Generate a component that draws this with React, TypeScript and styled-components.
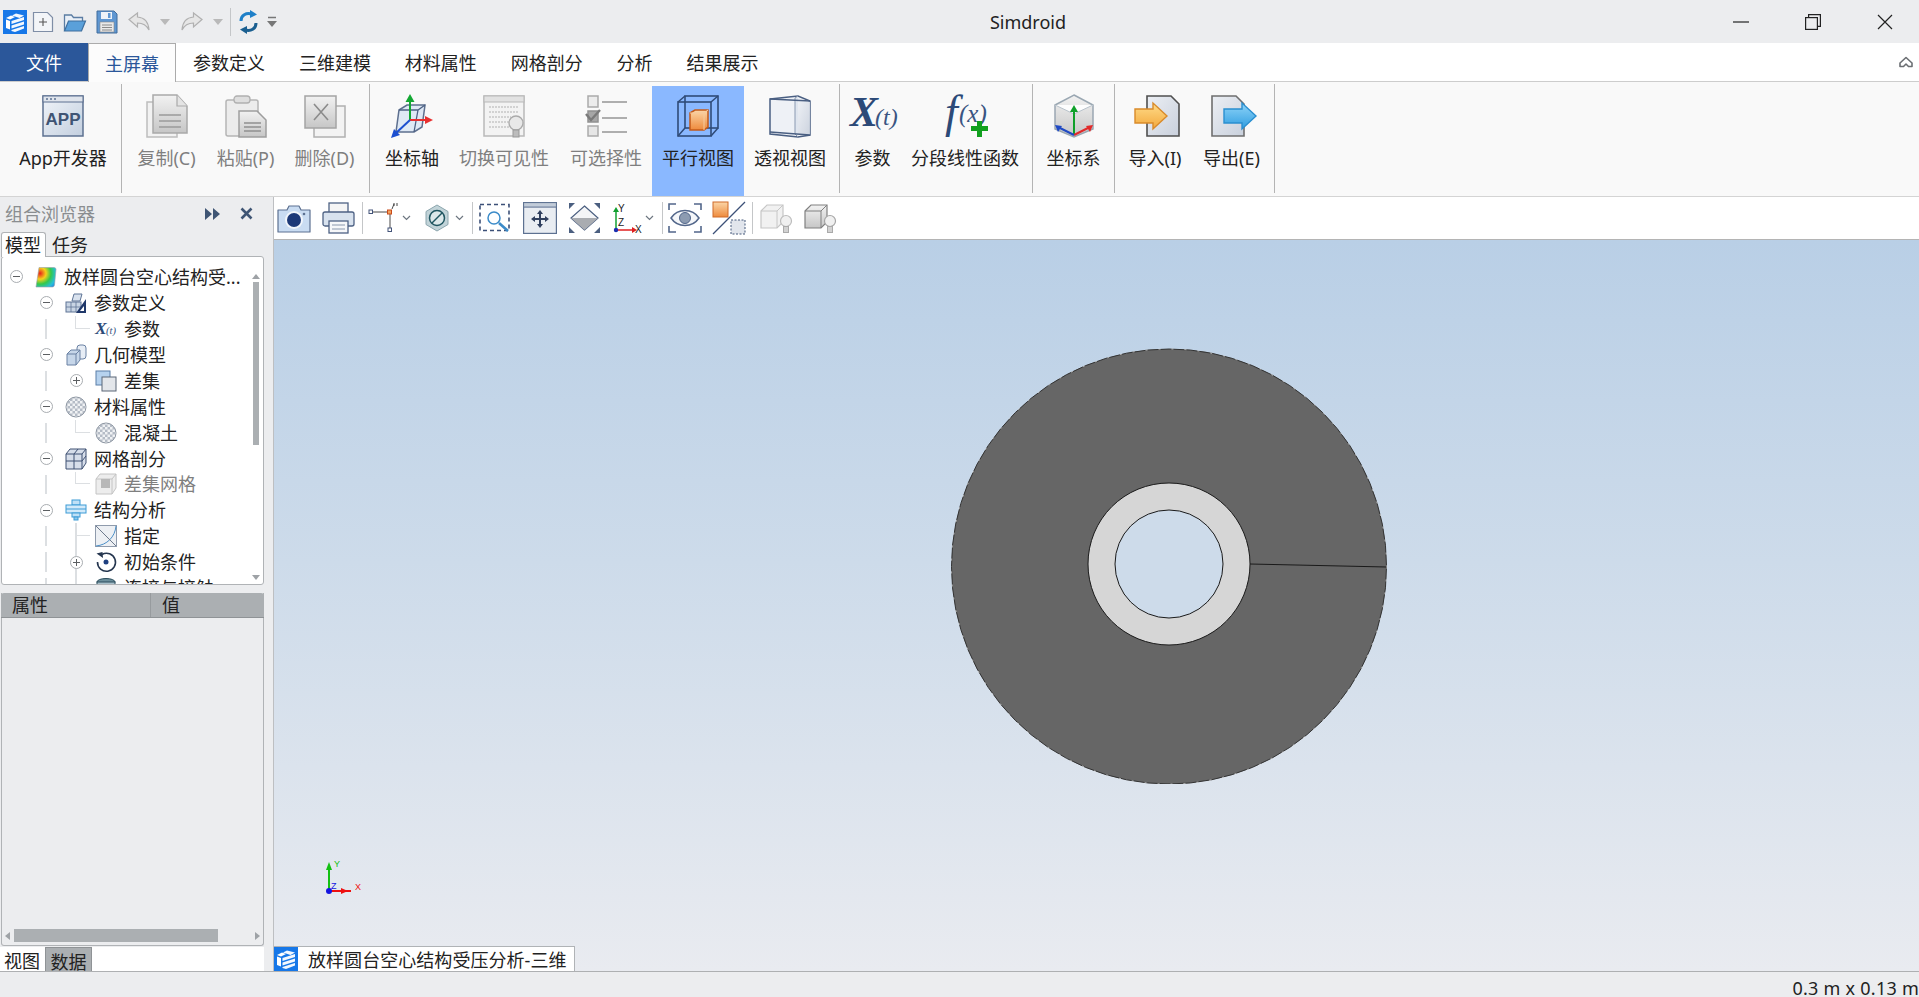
import React from "react";
import styled, { createGlobalStyle } from "styled-components";

const Global = createGlobalStyle`
  html, body { margin: 0; padding: 0; background: #ecedef; overflow: hidden; }
  * { box-sizing: border-box; }
`;
const FONT = `"Noto Sans", "Noto Sans CJK SC", "Liberation Sans", sans-serif`;

const Page = styled.div`
  width: 1919px; height: 997px; display: flex; flex-direction: column; overflow: hidden;
  font-family: ${FONT}; font-size: 18px; color: #222; background: #ecedef;
`;
const DefsHolder = styled.svg`position: absolute; width: 0; height: 0;`;
const Ico = styled.svg`display: block; flex: none; overflow: visible;`;

/* title bar */
const TitleBar = styled.div`height: 43px; flex: none; display: flex; align-items: center; background: #ecedef; position: relative;`;
const QuickAccess = styled.div`width: 989px; flex: none; display: flex; align-items: center; padding-left: 3px;`;
const QuickSlot = styled.div<{ $ml?: number }>`margin-left: ${p => p.$ml ?? 0}px; flex: none;`;
const QuickSep = styled.div<{ $ml?: number }>`width: 1px; height: 28px; background: #c4c6c8; margin-left: ${p => p.$ml ?? 0}px;`;
const AppTitle = styled.div`width: 78px; text-align: center; font-size: 18px; line-height: 24px; color: #222;`;
const WinControls = styled.div`margin-left: auto; display: flex; align-items: center; padding-right: 26px; gap: 56px;`;

/* menu */
const MenuBar = styled.div`height: 39px; flex: none; display: flex; background: #fff; border-bottom: 1px solid #cdcdcd; position: relative;`;
const FileTab = styled.div`width: 88px; height: 38px; padding-top: 1px; background: #2b579a; color: #fff; display: flex; align-items: center; justify-content: center; line-height: 24px;`;
const HomeTab = styled.div`
  width: 88px; height: 39px; padding-top: 1px; background: #fcfcfc; color: #2b579a; border: 1px solid #ababab; border-bottom: none;
  display: flex; align-items: center; justify-content: center; line-height: 24px; margin-right: 17px; position: relative; z-index: 1;
`;
const MenuItem = styled.div`height: 38px; padding-top: 1px; display: flex; align-items: center; margin-right: 33.9px; line-height: 24px; color: #222;`;
const Collapse = styled.div`margin-left: auto; align-self: center; padding-right: 6px;`;

/* ribbon */
const Ribbon = styled.div`height: 115px; flex: none; display: flex; background: #f9f9f9; border-bottom: 1px solid #d4d4d4;`;
const RibbonSep = styled.div<{ $ml?: number }>`width: 1px; height: 109px; margin-top: 2px; margin-left: ${p => p.$ml ?? 0}px; background: #b4b4b4; flex: none;`;
const RibbonBtn = styled.div<{ $w: number; $ml?: number; $pl?: number; $active?: boolean; $off?: boolean }>`
  width: ${p => p.$w}px; margin-left: ${p => p.$ml ?? 0}px; padding-left: ${p => p.$pl ?? 0}px; flex: none; margin-top: 4px; height: 110px; padding-top: 8px;
  display: flex; flex-direction: column; align-items: center;
  background: ${p => (p.$active ? "#8ab8ff" : "transparent")};
  color: ${p => (p.$off ? "#7f7f7f" : "#222")};
`;
const RibbonFill = styled.div<{ $w: number }>`width: ${p => p.$w}px; flex: none;`;
const RibbonLabel = styled.div<{ $mt?: number }>`margin-top: ${p => p.$mt ?? 8}px; line-height: 24px; white-space: nowrap;`;
const XtWrap = styled.div`padding: 2px 0 0 4px;`;

/* main */
const Main = styled.div`flex: 1; display: flex; min-height: 0;`;
const LeftPanel = styled.div`width: 273px; flex: none; display: flex; flex-direction: column; background: #ecedef; position: relative;`;
const DockHeader = styled.div`height: 35px; flex: none; display: flex; align-items: center; padding: 0 20px 2px 5px; color: #8a8d90;`;
const DockTitle = styled.div`flex: 1; line-height: 24px;`;
const DockBtns = styled.div`display: flex; align-items: center; gap: 19px;`;
const TabsRow = styled.div`height: 25px; flex: none; display: flex; padding-left: 1px; position: relative; z-index: 1;`;
const SmallTab = styled.div<{ $active?: boolean }>`
  width: ${p => (p.$active ? 45 : 44)}px; height: 25px; line-height: 24px; text-align: left;
  background: ${p => (p.$active ? "#fff" : "transparent")};
  border: ${p => (p.$active ? "1px solid #b0b3b6" : "1px solid transparent")};
  border-bottom: none; border-radius: 3px 3px 0 0; padding-left: ${p => (p.$active ? 3 : 5)}px;
`;
const TreeBox = styled.div`
  width: 263px; height: 329px; margin: -1px 0 0 1px; flex: none; display: flex; background: #fff;
  border: 1px solid #b0b3b6; border-radius: 3px; overflow: hidden;
`;
const TreeList = styled.div`flex: 1; padding-top: 7px; min-width: 0;`;
const Row = styled.div<{ $level: number; $dim?: boolean }>`
  position: relative; height: 25.95px; display: flex; align-items: center; white-space: nowrap;
  padding-left: ${p => 8 + 30 * p.$level}px; color: ${p => (p.$dim ? "#7f7f7f" : "#222")};
`;
const Expander = styled.div<{ $show: boolean }>`
  width: 13px; height: 13px; flex: none; margin-right: 12px; position: relative; z-index: 1; border-radius: 50%;
  background: ${p => (p.$show ? "#fff" : "transparent")};
  border: ${p => (p.$show ? "1px solid #a9adb1" : "none")};
  display: flex; align-items: center; justify-content: center;
`;
const ExpMark = styled.div<{ $plus?: boolean }>`
  width: 7px; height: 1px; background: #5c5f62; position: relative;
  &::after { content: ""; display: ${p => (p.$plus ? "block" : "none")}; position: absolute; left: 3px; top: -3px; width: 1px; height: 7px; background: #5c5f62; }
`;
const RowText = styled.span`margin-left: 7px; line-height: 24px;`;
const GuideMain = styled.div`position: absolute; left: 43px; top: 3px; bottom: 3px; width: 1.5px; background: #dcdfe2;`;
const Elbow = styled.div`position: absolute; left: 73px; top: 0; width: 15px; height: 50%; border-left: 1.5px solid #dcdfe2; border-bottom: 1.5px solid #dcdfe2;`;
const Through = styled.div`position: absolute; left: 73px; top: 0; bottom: 0; width: 1.5px; background: #dcdfe2;`;
const VScroll = styled.div`width: 12px; flex: none; margin-right: 1px; display: flex; flex-direction: column; align-items: center; padding-top: 17px;`;
const ArrowUp = styled.div`width: 0; height: 0; border: 4px solid transparent; border-top: none; border-bottom: 5px solid #9ea2a6;`;
const ArrowDown = styled.div`width: 0; height: 0; border: 4px solid transparent; border-bottom: none; border-top: 5px solid #9ea2a6; margin-top: auto; margin-bottom: 4px;`;
const VThumb = styled.div`width: 6px; height: 163px; margin-top: 3px; background: #abafb2;`;

const PropsBox = styled.div`
  width: 263px; height: 353px; margin: 8px 0 0 1px; flex: none; display: flex; flex-direction: column;
  border: 1px solid #b0b3b6; border-top: none; border-radius: 0 0 3px 3px; background: #ecedef;
`;
const PropsHead = styled.div`height: 25px; flex: none; margin: 0 -1px; display: flex; background: #abafb2; border-bottom: 1px solid #8f9396; border-radius: 3px 3px 0 0; line-height: 24px;`;
const PropsCol = styled.div<{ $w?: number }>`
  width: ${p => (p.$w ? `${p.$w}px` : "auto")}; flex: ${p => (p.$w ? "none" : 1)}; padding-left: 11px;
  border-right: ${p => (p.$w ? "1px solid #979b9e" : "none")};
`;
const PropsBody = styled.div`flex: 1;`;
const HScroll = styled.div`height: 13px; margin-bottom: 3px; flex: none; display: flex; align-items: center; padding: 0 3px;`;
const ArrowLeft = styled.div`width: 0; height: 0; border: 4px solid transparent; border-left: none; border-right: 5px solid #9ea2a6; flex: none;`;
const ArrowRight = styled.div`width: 0; height: 0; border: 4px solid transparent; border-right: none; border-left: 5px solid #9ea2a6; margin-left: auto; flex: none;`;
const HThumb = styled.div`width: 204px; height: 13px; margin-left: 4px; background: #abafb2;`;
const BottomTabs = styled.div`width: 264px; flex: 1; background: #fff; margin-top: 1px; display: flex; align-items: flex-end; padding-left: 3px; gap: 4px;`;
const BottomTab = styled.div<{ $active?: boolean }>`
  height: 24px; line-height: 28px; padding: 0 1px; width: ${p => (p.$active ? 47 : 38)}px; text-align: center;
  background: ${p => (p.$active ? "#abafb2" : "transparent")};
  border: ${p => (p.$active ? "1px solid #8f9396" : "none")}; border-bottom: none; white-space: nowrap;
`;

const RightCol = styled.div`flex: 1; display: flex; flex-direction: column; min-width: 0; border-left: 1px solid #bdbfc2;`;
const Toolbar = styled.div`height: 43px; flex: none; display: flex; align-items: center; background: #fff; border-bottom: 1px solid #b4b4b4;`;
const ToolSlot = styled.div<{ $ml: number }>`margin-left: ${p => p.$ml}px; flex: none;`;
const ToolSep = styled.div<{ $ml: number }>`margin-left: ${p => p.$ml}px; width: 1px; height: 32px; background: #c4c6c8; flex: none;`;
const Viewport = styled.div`
  flex: 1; position: relative; overflow: hidden; display: flex; align-items: flex-end;
  background: linear-gradient(180deg, #b9cfe6 0%, #cddbea 44%, #e9ebf0 100%);
`;
const Disk = styled.svg`position: absolute; left: 675px; top: 104px;`;
const Triad = styled.svg`position: absolute; left: 40px; top: 618px;`;
const DocTab = styled.div`
  height: 25px; width: 301px; display: flex; align-items: center; background: #fff; border: 1px solid #b0b3b6; border-left: none; border-bottom: none;
`;
const DocIcon = styled.div`width: 24px; height: 24px; flex: none; margin-right: 10px;`;
const DocLabel = styled.div`line-height: 27px; height: 24px; white-space: nowrap; letter-spacing: .05px;`;
const StatusBar = styled.div`
  height: 26px; flex: none; border-top: 1px solid #aeb0b2; background: #ecedef; display: flex; justify-content: flex-end; overflow: hidden; position: relative; z-index: 2;
`;
const StatusText = styled.div`line-height: 24px; margin-top: 4px; letter-spacing: .25px; white-space: nowrap; color: #222;`;

/* ---------- icons ---------- */
const Defs = () => (
  <DefsHolder>
    <defs>
      <linearGradient id="gGray" x1="0" y1="0" x2="0" y2="1"><stop offset="0" stopColor="#f2f2f2" /><stop offset="1" stopColor="#c6c6c6" /></linearGradient>
      <linearGradient id="gBlue" x1="0" y1="0" x2="1" y2="1"><stop offset="0" stopColor="#f0f4f9" /><stop offset="1" stopColor="#c3cfdf" /></linearGradient>
      <linearGradient id="gDoc" x1="0" y1="0" x2="1" y2="1"><stop offset="0" stopColor="#eceff4" /><stop offset="1" stopColor="#c9d0dc" /></linearGradient>
      <linearGradient id="gOrange" x1="0" y1="0" x2="0" y2="1"><stop offset="0" stopColor="#fbd6a8" /><stop offset="1" stopColor="#ee8a3c" /></linearGradient>
      <linearGradient id="gYel" x1="0" y1="0" x2="0" y2="1"><stop offset="0" stopColor="#ffdc8a" /><stop offset="1" stopColor="#f3a83c" /></linearGradient>
      <linearGradient id="gSky" x1="0" y1="0" x2="0" y2="1"><stop offset="0" stopColor="#8fd4f8" /><stop offset="1" stopColor="#2f9de0" /></linearGradient>
      <radialGradient id="gHeat" cx=".2" cy=".3" r="1"><stop offset="0" stopColor="#e8221c" /><stop offset=".3" stopColor="#f5d21c" /><stop offset=".55" stopColor="#35c84a" /><stop offset=".8" stopColor="#26c0d8" /><stop offset="1" stopColor="#2a7be0" /></radialGradient>
      <pattern id="pDots" width="5" height="5" patternUnits="userSpaceOnUse"><rect width="2.500" height="2.500" fill="#fff" opacity=".8" /><rect x="2.500" y="2.500" width="2.500" height="2.500" fill="#fff" opacity=".8" /></pattern>
    </defs>
  </DefsHolder>
);

const Logo = ({ s = 24 }: { s?: number }) => (
  <Ico width={s} height={s} viewBox="0 0 24 24">
    <rect width="24" height="24" fill="#1677e8" />
    <path d="M3 8l5-2.500 4 1.500-5 2.500zM3 9.500l4 1.500v8.500l-4-1.500z" fill="#fff" />
    <path d="M9 5.500l4-2 8 2-4.500 2.500z M8.500 11l12.500-4v3l-12.500 4zM8.500 15.500l12.500-4v3l-12.500 4zM8.500 20l12.500-4v2.500l-9 3.500-3.500-1z" fill="#fff" opacity=".95" />
  </Ico>
);
const NewIc = () => (
  <Ico width="22" height="22" viewBox="0 0 22 22">
    <path d="M1.500 1.500h14l5 5v14h-19z" fill="#f3f5f8" stroke="#7f8ea6" strokeWidth="1.200" />
    <path d="M7 11h8M11 7v8" stroke="#555" strokeWidth="1.100" />
  </Ico>
);
const OpenIc = () => (
  <Ico width="24" height="22" viewBox="0 0 24 22">
    <path d="M1.500 20V4h7l2 2.500h9V10" fill="#eaf0f7" stroke="#5b7da3" strokeWidth="1.300" />
    <path d="M1.500 20l4-10h17l-4 10z" fill="#5aa0da" stroke="#3e6f9e" strokeWidth="1.200" />
  </Ico>
);
const SaveIc = () => (
  <Ico width="22" height="24" viewBox="0 0 22 24">
    <path d="M1 1h17l3 3v19H1z" fill="#5f97d2" stroke="#416c9c" />
    <rect x="5" y="2" width="11" height="7" fill="#eef3f9" />
    <rect x="12" y="3" width="2.500" height="5" fill="#5f97d2" />
    <rect x="4" y="12" width="14" height="10" fill="#e9e9e9" stroke="#888" strokeWidth=".6" />
    <path d="M6 15h10M6 17.500h10M6 20h10" stroke="#8a8a8a" />
  </Ico>
);
const UndoPath = styled.path`fill: #e6e6e6; stroke: #b0b0b0; stroke-width: 1.2;`;
const UndoIc = () => (
  <Ico width="22" height="20" viewBox="0 0 22 20">
    <UndoPath d="M1 7.500L9.500 1v4c7 .5 11 5.500 11.500 13-2.500-5-6-7-11.500-7v4z" />
  </Ico>
);
const RedoIc = () => (
  <Ico width="22" height="20" viewBox="0 0 22 20">
    <UndoPath d="M21 7.500L12.500 1v4C5.500 5.500 1.500 10.500 1 18c2.500-5 6-7 11.500-7v4z" />
  </Ico>
);
const SmallDown = ({ c = "#b9b9b9" }: { c?: string }) => (
  <Ico width="10" height="6" viewBox="0 0 10 6"><path d="M0 0h10L5 6z" fill={c} /></Ico>
);
const RefreshIc = () => (
  <Ico width="19" height="24" viewBox="0 0 19 24">
    <path d="M2 11C2 5 7 2.500 13 4" fill="none" stroke="#1f80c8" strokeWidth="3" />
    <path d="M11 0l7 4.500-7 3.500z" fill="#1f80c8" />
    <path d="M17 13c0 6-5 8.500-11 7" fill="none" stroke="#1a5f90" strokeWidth="3" />
    <path d="M8 24l-7-4.500 7-3.500z" fill="#1a5f90" />
  </Ico>
);
const QaMore = () => (
  <Ico width="10" height="12" viewBox="0 0 10 12"><path d="M1 1.500h8" stroke="#777" strokeWidth="1.500" /><path d="M0 5h10L5 11z" fill="#777" /></Ico>
);
const MinIc = () => <Ico width="16" height="2" viewBox="0 0 16 2"><path d="M0 1h16" stroke="#222" strokeWidth="1.200" /></Ico>;
const RestoreIc = () => (
  <Ico width="16" height="16" viewBox="0 0 16 16"><rect x=".6" y="3.600" width="11.800" height="11.800" fill="none" stroke="#222" strokeWidth="1.200" /><path d="M3.600 3.500V.6h11.800v11.800h-3" fill="none" stroke="#222" strokeWidth="1.200" /></Ico>
);
const CloseIc = () => <Ico width="16" height="16" viewBox="0 0 16 16"><path d="M1 1l14 14M15 1L1 15" stroke="#222" strokeWidth="1.200" /></Ico>;
const CollapseIc = () => (
  <Ico width="14" height="12" viewBox="0 0 14 12"><path d="M1 7l6-5.500L13 7v3.500H9.500L7 8l-2.500 2.500H1z" fill="#fff" stroke="#6b6f73" strokeWidth="1.600" strokeLinejoin="round" /></Ico>
);

const R = ({ children }: { children: React.ReactNode }) => <Ico width="42" height="44" viewBox="0 0 42 44">{children}</Ico>;
const AppIc = () => (
  <R>
    <rect x="1" y="2" width="40" height="40" fill="url(#gBlue)" stroke="#5d7191" strokeWidth="1.500" />
    <rect x="1" y="2" width="40" height="6" fill="#dfe4ec" stroke="#5d7191" strokeWidth="1" />
    <path d="M4 5h2M8 5h2M12 5h2" stroke="#5d7191" strokeWidth="1.500" />
    <text x="21" y="31" textAnchor="middle" fontFamily="Liberation Sans" fontWeight="700" fontSize="17" fill="#3f5474">APP</text>
  </R>
);
const CopyIc = () => (
  <R>
    <rect x="1" y="8" width="30" height="35" fill="#f2f2f2" stroke="#bdbdbd" strokeWidth="1.500" />
    <path d="M7 1h24l10 11v27H7z" fill="url(#gGray)" stroke="#a9a9a9" strokeWidth="1.500" />
    <path d="M31 1v11h10" fill="#e4e4e4" stroke="#a9a9a9" strokeWidth="1.200" />
    <path d="M13 21h22M13 27h22M13 33h22" stroke="#9b9b9b" strokeWidth="1.500" />
  </R>
);
const PasteIc = () => (
  <R>
    <rect x="1" y="6" width="32" height="36" rx="2" fill="#ececec" stroke="#b5b5b5" strokeWidth="1.500" />
    <rect x="9" y="2" width="16" height="7" rx="3" fill="#dedede" stroke="#b0b0b0" strokeWidth="1.300" />
    <path d="M14 17h18l9 9v17H14z" fill="url(#gGray)" stroke="#9e9e9e" strokeWidth="1.500" />
    <path d="M19 29h17M19 33h17M19 37h17" stroke="#909090" strokeWidth="1.400" />
  </R>
);
const DeleteIc = () => (
  <R>
    <rect x="10" y="12" width="31" height="31" fill="#f3f3f3" stroke="#b0b0b0" strokeWidth="1.500" />
    <rect x="1" y="2" width="31" height="32" fill="url(#gGray)" stroke="#a4a4a4" strokeWidth="1.500" />
    <path d="M10 10l14 16M24 10L10 26" stroke="#8b8b8b" strokeWidth="1.600" />
  </R>
);
const AxesIc = () => (
  <R>
    <path d="M8 16l8-5h18l-3 22-8 5H5z" fill="#dde8f5" stroke="#4d6184" strokeWidth="1.500" opacity=".9" />
    <path d="M8 16h19l7-5M27 16l-4 22" fill="none" stroke="#4d6184" strokeWidth="1.300" />
    <path d="M19 26V6" stroke="#13a833" strokeWidth="2" /><path d="M19 0l4.500 8h-9z" fill="#13a833" />
    <path d="M19 26h16" stroke="#e83030" strokeWidth="2" /><path d="M42 26l-8 4v-8z" fill="#e83030" />
    <path d="M19 26L5 39" stroke="#1c4fd0" strokeWidth="2" /><path d="M0 44l3-9 6 6z" fill="#1c4fd0" />
  </R>
);
const VisIc = () => (
  <R>
    <rect x="1" y="2" width="40" height="40" fill="#f3f3f3" stroke="#b9b9b9" strokeWidth="1.500" />
    <rect x="1" y="2" width="40" height="6" fill="#e2e2e2" stroke="#b9b9b9" />
    <path d="M6 13h30M6 18h30M6 23h22M6 28h20M6 33h20" stroke="#c7c7c7" strokeWidth="1.400" strokeDasharray="2 1" />
    <circle cx="33" cy="29" r="7" fill="#e8e8e8" stroke="#aaa" strokeWidth="1.300" />
    <rect x="30" y="36" width="6" height="7" fill="#bcbcbc" stroke="#999" />
  </R>
);
const SelIc = () => (
  <R>
    <rect x="3" y="2" width="10" height="11" fill="#ececec" stroke="#aaa" strokeWidth="1.500" />
    <rect x="3" y="17" width="10" height="11" fill="#a6a6a6" stroke="#909090" strokeWidth="1.500" />
    <rect x="3" y="32" width="10" height="10" fill="#e6e6e6" stroke="#aaa" strokeWidth="1.500" />
    <path d="M1 20l5 6 9-10" fill="none" stroke="#7a7a7a" strokeWidth="2.400" />
    <path d="M17 8h25M17 24h25M17 38h25" stroke="#aeaeae" strokeWidth="2" />
  </R>
);
const ParallelIc = () => (
  <R>
    <rect x="1" y="8" width="33" height="34" fill="none" stroke="#2f4b78" strokeWidth="1.600" />
    <rect x="8" y="2" width="33" height="32" fill="none" stroke="#2f4b78" strokeWidth="1.600" />
    <path d="M1 8l7-6M34 8l7-6M1 42l7-8M34 42l7-8" stroke="#2f4b78" strokeWidth="1.500" />
    <path d="M13 19l5-3h13v17l-4 3H13z" fill="url(#gOrange)" stroke="#c45a1a" strokeWidth="1.500" />
    <path d="M13 19h14v17M27 19l4-3" fill="none" stroke="#f5c99d" strokeWidth="1" />
  </R>
);
const PerspIc = () => (
  <R>
    <path d="M1 5l28-3 12 5v34l-12 2-28-3z" fill="#eef1f6" stroke="#4a5f82" strokeWidth="1.500" />
    <path d="M29 2l-3 2v36l3 3" fill="#dfe5ee" stroke="#8a99b1" />
    <path d="M29 8h12v33H29z" fill="url(#gDoc)" opacity=".9" />
    <path d="M1 38l40 3M1 5l40 2" stroke="#4a5f82" strokeWidth="1.300" />
  </R>
);
const XtIc = ({ w = 50, h = 36, fs = 42 }: { w?: number; h?: number; fs?: number }) => (
  <Ico width={w} height={h} viewBox="0 0 50 36">
    <text x="0" y="30" fontFamily="Liberation Serif" fontStyle="italic" fontWeight="700" fontSize={fs} fill="#2c4a78">X</text>
    <text x="25" y="29" fontFamily="Liberation Serif" fontStyle="italic" fontSize="24" fill="#3a5582">(t)</text>
  </Ico>
);
const FxIc = () => (
  <Ico width="48" height="44" viewBox="0 0 48 44">
    <text x="4" y="33" fontFamily="Liberation Serif" fontStyle="italic" fontSize="46" fill="#2c4a78">f</text>
    <text x="18" y="28" fontFamily="Liberation Serif" fontStyle="italic" fontSize="25" fill="#3a5582">(x)</text>
    <path d="M36 27h5v5h-5zM30 32h17v5H30zM36 37h5v6h-5z" fill="#12a01f" />
  </Ico>
);
const CoordIc = () => (
  <R>
    <path d="M21 1L40 11v24L21 43 2 35V11z" fill="url(#gGray)" stroke="#9aa7b2" strokeWidth="1.500" />
    <path d="M2 11l19 9 19-9" fill="#fdfdfd" stroke="#b8c2cb" strokeWidth="1" />
    <path d="M21 41V16" stroke="#0fa02a" strokeWidth="2" /><path d="M21 11l4 7h-8z" fill="#0fa02a" />
    <path d="M21 41l14-7" stroke="#e22a2a" strokeWidth="2" /><path d="M40 31l-3 7-4-6z" fill="#e22a2a" />
    <path d="M21 41L7 34" stroke="#1f49c4" strokeWidth="2" /><path d="M2 31l3 7 4-6z" fill="#1f49c4" />
  </R>
);
const ImportIc = () => (
  <Ico width="48" height="44" viewBox="-3 0 48 44">
    <path d="M13 2h24l8 8v32H13z" fill="url(#gDoc)" stroke="#4f4f4f" strokeWidth="1.600" />
    <path d="M1 15h18V9l14 13-14 13v-6H1z" fill="url(#gYel)" stroke="#d98a2a" strokeWidth="1.400" />
  </Ico>
);
const ExportIc = () => (
  <Ico width="46" height="44" viewBox="-2 0 46 44">
    <path d="M1 2h24l8 8v32H1z" fill="url(#gDoc)" stroke="#6f6f6f" strokeWidth="1.600" />
    <path d="M13 15h18V9l14 13-14 13v-6H13z" fill="url(#gSky)" stroke="#2a8fd0" strokeWidth="1.400" />
  </Ico>
);

/* tree icons */
const T = ({ children }: { children: React.ReactNode }) => <Ico width="22" height="22" viewBox="0 0 22 22">{children}</Ico>;
const HeatIc = () => (
  <T><path d="M4 1.500h15q2 0 2 2L19.500 19q-.3 2-2 2H1z" fill="url(#gHeat)" stroke="#9aa0a6" strokeWidth=".6" /></T>
);
const ParamDefIc = () => (
  <T>
    <path d="M7 9l2-7h8l-2 7z" fill="#d9e2ee" stroke="#5f7596" />
    <rect x="1" y="10" width="15" height="10" fill="#c9d5e4" stroke="#5f7596" />
    <path d="M6 10v10M11 10v10M1 15h15" stroke="#5f7596" strokeWidth=".8" />
    <path d="M21 7v14H11z" fill="#20386a" /><path d="M19 14v5h-4z" fill="#fff" />
  </T>
);
const GeoIc = () => (
  <T>
    <rect x="12" y="1" width="9" height="14" rx="3" fill="#e7edf5" stroke="#6a81a3" />
    <path d="M2 10l4-4h9v10l-4 5H2z" fill="#c6d6e9" stroke="#6a81a3" />
    <path d="M2 10h9v11M11 10l4-4" fill="none" stroke="#6a81a3" />
  </T>
);
const DiffIc = () => (
  <T>
    <rect x="1" y="1" width="14" height="14" fill="#b6d2ee" stroke="#5b7fa8" />
    <rect x="7" y="7" width="14" height="14" fill="#e3e6ea" stroke="#5b6677" />
  </T>
);
const MatIc = () => (
  <T><circle cx="11" cy="11" r="10" fill="#b5bcc6" stroke="#8e97a3" /><circle cx="11" cy="11" r="9.500" fill="url(#pDots)" /></T>
);
const MeshIc = () => (
  <T>
    <path d="M1 6l4-5h16v14l-4 6H1z" fill="#d7deea" stroke="#3f5173" />
    <path d="M1 6h16v15M17 6l4-5M1 13h16M9 6v15M13 1l-4 5M17 13l4-5" fill="none" stroke="#3f5173" />
  </T>
);
const DiffMeshIc = () => (
  <T>
    <path d="M1 6l4-5h16v14l-4 6H1z" fill="#ededed" stroke="#c4c4c4" />
    <path d="M1 6h16v15M17 6l4-5" fill="none" stroke="#c4c4c4" />
    <rect x="6" y="6" width="9" height="9" fill="#b8b8b8" />
  </T>
);
const StructIc = () => (
  <T>
    <rect x="7" y="1" width="8" height="5" fill="#bfe0f6" stroke="#3d9bd6" />
    <rect x="1" y="6" width="20" height="8" fill="#d2eafa" stroke="#3d9bd6" />
    <path d="M1 10h20" stroke="#3d9bd6" />
    <rect x="7" y="14" width="8" height="4" fill="#bfe0f6" stroke="#3d9bd6" />
    <rect x="9" y="18" width="4" height="3" fill="#8cc8ec" stroke="#3d9bd6" />
  </T>
);
const AssignIc = () => (
  <T>
    <rect x=".5" y=".5" width="21" height="21" fill="#edf0f4" stroke="#8f9bac" />
    <path d="M21 1C20 12 12 20 1 21" fill="none" stroke="#4c90c8" strokeWidth="1" />
    <path d="M1 1l20 20" stroke="#6d7a8c" strokeWidth="1" />
  </T>
);
const InitIc = () => (
  <T>
    <path d="M7 3.500A9 9 0 1 1 2.500 11" fill="none" stroke="#25364f" strokeWidth="1.600" />
    <path d="M1.500 2.500L7.500 1l.5 6z" fill="#25364f" />
    <circle cx="11" cy="11" r="2.500" fill="#1e3f80" />
  </T>
);
const ContactIc = () => (
  <T>
    <ellipse cx="11" cy="5" rx="9" ry="3.500" fill="#6c8f9c" stroke="#2b4d5c" />
    <rect x="2" y="5" width="18" height="12" fill="#a9c0ca" stroke="#2b4d5c" />
  </T>
);

/* toolbar icons */
const CameraIc = () => (
  <Ico width="34" height="29" viewBox="0 0 34 29">
    <path d="M1 6h9l2-4h10l2 4h9v22H1z" fill="#c9dcf2" stroke="#5d7191" strokeWidth="1.200" strokeLinejoin="round" />
    <circle cx="17" cy="16" r="9" fill="#f2f6fb" />
    <circle cx="17" cy="16" r="7" fill="#1d3a78" />
    <circle cx="27" cy="10" r="1.300" fill="#5d7191" />
  </Ico>
);
const PrinterIc = () => (
  <Ico width="33" height="32" viewBox="0 0 33 32">
    <rect x="7" y="1" width="19" height="10" fill="#f5f5f5" stroke="#4e6284" strokeWidth="1.300" />
    <rect x="1" y="10" width="31" height="14" rx="2" fill="#d8e2ee" stroke="#4e6284" strokeWidth="1.300" />
    <rect x="7" y="19" width="19" height="12" fill="#f6f7f9" stroke="#4e6284" strokeWidth="1.300" />
    <path d="M10 23h13M10 27h13" stroke="#8a98ad" />
  </Ico>
);
const NodeIc = () => (
  <Ico width="30" height="32" viewBox="0 0 30 32">
    <path d="M4 10h17M22 10v17" stroke="#4b4b4b" strokeWidth="1" />
    <path d="M24 7l2-5" stroke="#4b4b4b" strokeWidth="1" />
    <rect x="1" y="8" width="3.500" height="3.500" fill="#fff" stroke="#44557a" />
    <rect x="19.500" y="8" width="4" height="4" fill="#f5a25d" stroke="#c84a1a" />
    <rect x="20" y="26" width="3.500" height="3.500" fill="#fff" stroke="#44557a" />
    <path d="M26 1v3M29 1v3" stroke="#444" />
  </Ico>
);
const Chev = () => <Ico width="9" height="6" viewBox="0 0 9 6"><path d="M1 1l3.500 3.500L8 1" fill="none" stroke="#6d7680" strokeWidth="1.200" /></Ico>;
const HexIc = () => (
  <Ico width="24" height="28" viewBox="0 0 24 28">
    <path d="M12 1l11 6.500v13L12 27 1 20.500v-13z" fill="#c1d3d8" stroke="#8ca6ae" />
    <circle cx="12" cy="14" r="7.500" fill="#dce8ea" stroke="#1f5560" strokeWidth="1.500" />
    <path d="M7 19L17 9" stroke="#1f5560" strokeWidth="1.500" />
  </Ico>
);
const ZoomBoxIc = () => (
  <Ico width="32" height="30" viewBox="0 0 32 30">
    <rect x="1" y="1.500" width="29" height="26" fill="none" stroke="#3c5078" strokeWidth="1.600" strokeDasharray="4 3" />
    <circle cx="15" cy="15" r="6" fill="#fff" stroke="#3b8bc9" strokeWidth="1.500" />
    <path d="M20 20l9 8" stroke="#3b8bc9" strokeWidth="2.600" />
  </Ico>
);
const FitIc = () => (
  <Ico width="34" height="32" viewBox="0 0 34 32">
    <rect x=".6" y=".6" width="32.800" height="30.800" fill="#e9edf2" stroke="#5d7191" strokeWidth="1.200" />
    <rect x=".6" y=".6" width="32.800" height="4.500" fill="#c2ccd9" stroke="#5d7191" />
    <path d="M17 8l3 4h-2v4h4v-2l4 3-4 3v-2h-4v4h2l-3 4-3-4h2v-4h-4v2l-4-3 4-3v2h4v-4h-2z" fill="#2f3f5e" />
  </Ico>
);
const DiamondIc = () => (
  <Ico width="33" height="32" viewBox="0 0 33 32">
    <path d="M16.500 4L30 16 16.500 28 3 16z" fill="#f4f5f7" stroke="#4b5f80" strokeWidth="1.200" />
    <path d="M3 16h27L16.500 28z" fill="#a9acb1" />
    <path d="M1 1h6L1 7zM32 1h-6l6 6zM1 31h6l-6-6zM32 31h-6l6-6z" fill="#4b5f80" />
  </Ico>
);
const AxisIc = () => (
  <Ico width="30" height="32" viewBox="0 0 30 32">
    <path d="M4 28V8" stroke="#12a030" strokeWidth="1.500" /><path d="M4 5l3 5H1z" fill="#12a030" />
    <path d="M4 28h17" stroke="#e02020" strokeWidth="1.500" /><path d="M25 28l-5-3v6z" fill="#e02020" />
    <circle cx="4" cy="28" r="2.200" fill="#1b2fb0" />
    <text x="6" y="10" fontFamily="Liberation Sans" fontSize="10" fill="#222">Y</text>
    <text x="6" y="24" fontFamily="Liberation Sans" fontSize="10" fill="#222">Z</text>
    <text x="23" y="31" fontFamily="Liberation Sans" fontSize="10" fill="#222">X</text>
  </Ico>
);
const EyeIc = () => (
  <Ico width="34" height="32" viewBox="0 0 34 32">
    <path d="M1 8V2h7M26 2h7v6M1 24v6h7M26 30h7v-6" fill="none" stroke="#52668a" strokeWidth="1.600" />
    <path d="M3 16C7 10 11.500 8.500 17 8.500S27 10 31 16C27 22 22.500 23.500 17 23.500S7 22 3 16z" fill="#f4f6f9" stroke="#52668a" strokeWidth="1.500" />
    <circle cx="17" cy="16" r="5.500" fill="#8c9bb1" stroke="#52668a" />
  </Ico>
);
const SplitIc = () => (
  <Ico width="34" height="34" viewBox="0 0 34 34">
    <rect x="1" y="1" width="15" height="15" fill="url(#gOrange)" stroke="#cf6a28" />
    <rect x="19" y="19" width="14" height="14" fill="#e1e5ec" stroke="#45597b" strokeDasharray="2 1.500" />
    <path d="M1 33L33 1" stroke="#3c5078" strokeWidth="1.300" />
  </Ico>
);
const BulbCube = ({ dark }: { dark?: boolean }) => (
  <Ico width="33" height="32" viewBox="0 0 33 32">
    <path d="M1 9l6-6h16v17l-6 6H1z" fill={dark ? "url(#gGray)" : "#f1f1f1"} stroke={dark ? "#808080" : "#c6c6c6"} strokeWidth="1.200" />
    <path d="M1 9h16v17M17 9l6-6" fill="none" stroke={dark ? "#808080" : "#c6c6c6"} />
    <circle cx="26" cy="19" r="5.500" fill="#f0f0f0" stroke={dark ? "#a5a5a5" : "#bcbcbc"} strokeWidth="1.200" />
    <rect x="23.500" y="24.500" width="5" height="6" fill="#d2d2d2" stroke="#aaa" />
  </Ico>
);

const tree: { lv: number; text: string; exp?: "m" | "p"; ic: React.ReactNode; dim?: boolean; guide?: boolean; elbow?: boolean; through?: boolean }[] = [
  { lv: 0, text: "放样圆台空心结构受...", exp: "m", ic: <HeatIc /> },
  { lv: 1, text: "参数定义", exp: "m", ic: <ParamDefIc /> },
  { lv: 2, text: "参数", ic: <XtIc w={22} h={16} fs={40} />, guide: true, elbow: true },
  { lv: 1, text: "几何模型", exp: "m", ic: <GeoIc /> },
  { lv: 2, text: "差集", exp: "p", ic: <DiffIc />, guide: true },
  { lv: 1, text: "材料属性", exp: "m", ic: <MatIc /> },
  { lv: 2, text: "混凝土", ic: <MatIc />, guide: true, elbow: true },
  { lv: 1, text: "网格剖分", exp: "m", ic: <MeshIc /> },
  { lv: 2, text: "差集网格", ic: <DiffMeshIc />, dim: true, guide: true, elbow: true },
  { lv: 1, text: "结构分析", exp: "m", ic: <StructIc /> },
  { lv: 2, text: "指定", ic: <AssignIc />, guide: true, elbow: true, through: true },
  { lv: 2, text: "初始条件", exp: "p", ic: <InitIc />, guide: true, through: true },
  { lv: 2, text: "连接与接触", ic: <ContactIc />, guide: true, through: true },
];

export default function App() {
  return (
    <Page>
      <Global />
      <Defs />
      <TitleBar>
        <QuickAccess>
          <QuickSlot><Logo /></QuickSlot>
          <QuickSlot $ml={5}><NewIc /></QuickSlot>
          <QuickSlot $ml={9}><OpenIc /></QuickSlot>
          <QuickSlot $ml={9}><SaveIc /></QuickSlot>
          <QuickSlot $ml={10}><UndoIc /></QuickSlot>
          <QuickSlot $ml={10}><SmallDown /></QuickSlot>
          <QuickSlot $ml={11}><RedoIc /></QuickSlot>
          <QuickSlot $ml={10}><SmallDown /></QuickSlot>
          <QuickSep $ml={7} />
          <QuickSlot $ml={8}><RefreshIc /></QuickSlot>
          <QuickSlot $ml={9}><QaMore /></QuickSlot>
        </QuickAccess>
        <AppTitle>Simdroid</AppTitle>
        <WinControls><MinIc /><RestoreIc /><CloseIc /></WinControls>
      </TitleBar>
      <MenuBar>
        <FileTab>文件</FileTab>
        <HomeTab>主屏幕</HomeTab>
        {["参数定义", "三维建模", "材料属性", "网格剖分", "分析", "结果展示"].map(m => <MenuItem key={m}>{m}</MenuItem>)}
        <Collapse><CollapseIc /></Collapse>
      </MenuBar>
      <Ribbon>
        <RibbonBtn $w={121} $pl={5}><AppIc /><RibbonLabel>App开发器</RibbonLabel></RibbonBtn>
        <RibbonSep />
        <RibbonBtn $w={79} $ml={5} $off><CopyIc /><RibbonLabel>复制(C)</RibbonLabel></RibbonBtn>
        <RibbonBtn $w={79} $off><PasteIc /><RibbonLabel>粘贴(P)</RibbonLabel></RibbonBtn>
        <RibbonBtn $w={79} $off><DeleteIc /><RibbonLabel>删除(D)</RibbonLabel></RibbonBtn>
        <RibbonSep $ml={5} />
        <RibbonBtn $w={84}><AxesIc /><RibbonLabel>坐标轴</RibbonLabel></RibbonBtn>
        <RibbonBtn $w={100} $off><VisIc /><RibbonLabel>切换可见性</RibbonLabel></RibbonBtn>
        <RibbonBtn $w={92} $ml={6} $off><SelIc /><RibbonLabel>可选择性</RibbonLabel></RibbonBtn>
        <RibbonBtn $w={92} $active><ParallelIc /><RibbonLabel>平行视图</RibbonLabel></RibbonBtn>
        <RibbonBtn $w={92}><PerspIc /><RibbonLabel>透视视图</RibbonLabel></RibbonBtn>
        <RibbonFill $w={3} />
        <RibbonSep />
        <RibbonBtn $w={65}><XtWrap><XtIc /></XtWrap><RibbonLabel $mt={14}>参数</RibbonLabel></RibbonBtn>
        <RibbonBtn $w={120}><FxIc /><RibbonLabel>分段线性函数</RibbonLabel></RibbonBtn>
        <RibbonFill $w={7} />
        <RibbonSep />
        <RibbonBtn $w={81}><CoordIc /><RibbonLabel>坐标系</RibbonLabel></RibbonBtn>
        <RibbonSep />
        <RibbonBtn $w={80}><ImportIc /><RibbonLabel>导入(I)</RibbonLabel></RibbonBtn>
        <RibbonBtn $w={73}><ExportIc /><RibbonLabel>导出(E)</RibbonLabel></RibbonBtn>
        <RibbonFill $w={6} />
        <RibbonSep />
      </Ribbon>
      <Main>
        <LeftPanel>
          <DockHeader>
            <DockTitle>组合浏览器</DockTitle>
            <DockBtns>
              <Ico width="16" height="14" viewBox="0 0 16 14"><path d="M0 1l7 6-7 6zM8 1l7 6-7 6z" fill="#3f5574" /></Ico>
              <Ico width="13" height="13" viewBox="0 0 13 13"><path d="M1.500 1.500l10 10M11.500 1.500l-10 10" stroke="#3f5574" strokeWidth="2.600" /></Ico>
            </DockBtns>
          </DockHeader>
          <TabsRow>
            <SmallTab $active>模型</SmallTab>
            <SmallTab>任务</SmallTab>
          </TabsRow>
          <TreeBox>
            <TreeList>
              {tree.map(r => (
                <Row key={r.text} $level={r.lv} $dim={r.dim}>
                  {r.guide && <GuideMain />}
                  {r.through && <Through />}
                  {r.elbow && <Elbow />}
                  <Expander $show={!!r.exp}>{r.exp && <ExpMark $plus={r.exp === "p"} />}</Expander>
                  {r.ic}
                  <RowText>{r.text}</RowText>
                </Row>
              ))}
            </TreeList>
            <VScroll>
              <ArrowUp />
              <VThumb />
              <ArrowDown />
            </VScroll>
          </TreeBox>
          <PropsBox>
            <PropsHead>
              <PropsCol $w={150}>属性</PropsCol>
              <PropsCol>值</PropsCol>
            </PropsHead>
            <PropsBody />
            <HScroll>
              <ArrowLeft />
              <HThumb />
              <ArrowRight />
            </HScroll>
          </PropsBox>
          <BottomTabs>
            <BottomTab>视图</BottomTab>
            <BottomTab $active>数据</BottomTab>
          </BottomTabs>
        </LeftPanel>
        <RightCol>
          <Toolbar>
            <ToolSlot $ml={3}><CameraIc /></ToolSlot>
            <ToolSlot $ml={11}><PrinterIc /></ToolSlot>
            <ToolSep $ml={7} />
            <ToolSlot $ml={5}><NodeIc /></ToolSlot>
            <ToolSlot $ml={4}><Chev /></ToolSlot>
            <ToolSlot $ml={14}><HexIc /></ToolSlot>
            <ToolSlot $ml={6}><Chev /></ToolSlot>
            <ToolSep $ml={8} />
            <ToolSlot $ml={6}><ZoomBoxIc /></ToolSlot>
            <ToolSlot $ml={12}><FitIc /></ToolSlot>
            <ToolSlot $ml={11}><DiamondIc /></ToolSlot>
            <ToolSlot $ml={11}><AxisIc /></ToolSlot>
            <ToolSlot $ml={3}><Chev /></ToolSlot>
            <ToolSep $ml={8} />
            <ToolSlot $ml={5}><EyeIc /></ToolSlot>
            <ToolSlot $ml={10}><SplitIc /></ToolSlot>
            <ToolSep $ml={6} />
            <ToolSlot $ml={7}><BulbCube /></ToolSlot>
            <ToolSlot $ml={11}><BulbCube dark /></ToolSlot>
          </Toolbar>
          <Viewport>
            <Disk width="440" height="440" viewBox="0 0 440 440">
              <circle cx="220" cy="222.500" r="217.500" fill="#666" stroke="#333" strokeWidth="1" />
              <circle cx="220" cy="222.500" r="217.500" fill="none" stroke="#fff" strokeWidth="1" strokeDasharray="2 11" opacity=".6" />
              <circle cx="220" cy="220" r="81" fill="#d6d6d6" stroke="#1a1a1a" strokeWidth="1" />
              <circle cx="220" cy="220" r="54" fill="#cddbea" stroke="#1a1a1a" strokeWidth="1" />
              <path d="M301 220l136.500 3" stroke="#1a1a1a" strokeWidth="1" />
            </Disk>
            <Triad width="50" height="45" viewBox="0 0 50 45">
              <path d="M15 33V10" stroke="#12c012" strokeWidth="2" /><path d="M15 4l3 8h-6z" fill="#12c012" />
              <path d="M15 33h22" stroke="#ee1010" strokeWidth="2" /><path d="M34 33l-7-3v6z" fill="#ee1010" />
              <circle cx="15" cy="33" r="3" fill="#1414e0" />
              <text x="20" y="9" fontFamily="Liberation Sans" fontSize="9" fill="#12c012">Y</text>
              <text x="17" y="31" fontFamily="Liberation Sans" fontSize="9" fill="#1414e0">Z</text>
              <text x="41" y="32" fontFamily="Liberation Sans" fontSize="9" fill="#ee1010">X</text>
            </Triad>
            <DocTab>
              <DocIcon><Logo s={24} /></DocIcon>
              <DocLabel>放样圆台空心结构受压分析-三维</DocLabel>
            </DocTab>
          </Viewport>
        </RightCol>
      </Main>
      <StatusBar><StatusText>0.3 m x 0.13 m</StatusText></StatusBar>
    </Page>
  );
}
